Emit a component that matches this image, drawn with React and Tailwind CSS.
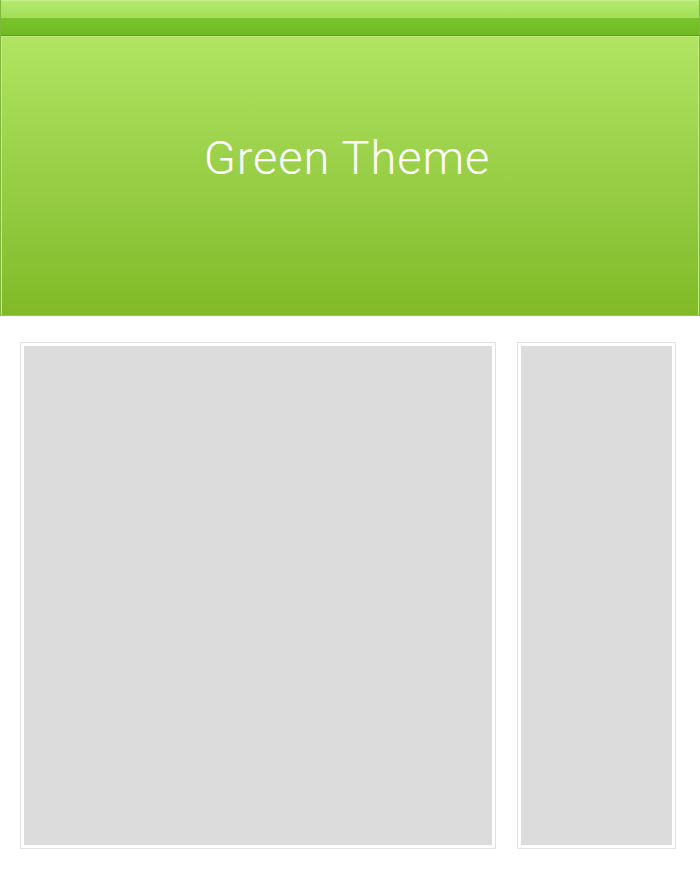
export default function App() {
  return (
    <div className="w-[700px] h-[873px] bg-white flex flex-col">
      <header className="h-[316px] flex flex-col border-x border-[#7fb83a] border-b border-b-[#93c652]">
        <div className="h-[36px] flex flex-col border-t border-[#c6f08c] shadow-[inset_1px_0_0_#c0ec84,inset_-1px_0_0_#c0ec84]">
          <div className="h-[17px] bg-gradient-to-b from-[#b4ea6e] to-[#a2de58]"></div>
          <div className="flex-1 bg-gradient-to-b from-[#7bc42e] to-[#6fb923]"></div>
          <div className="h-px bg-[#5f9f1c]"></div>
        </div>
        <div className="flex-1 flex items-center justify-center pb-[37px] bg-gradient-to-b from-[#b0e462] to-[#81ba25] border-t border-[#bdeb7c] shadow-[inset_1px_0_0_#bfeb82,inset_-1px_0_0_#bfeb82]">
          <h1 className="text-white text-[47px] font-light leading-none tracking-[0.9px] font-['Roboto',_'Liberation_Sans',_sans-serif] -ml-[6px]">Green Theme</h1>
        </div>
      </header>
      <main className="flex gap-[21px] pl-[20px] pt-[26px]">
        <div className="w-[476px] h-[507px] border border-[#e2e2e2] p-[3px] bg-white">
          <div className="w-full h-full bg-[#dcdcdc]"></div>
        </div>
        <div className="w-[159px] h-[507px] border border-[#e2e2e2] p-[3px] bg-white">
          <div className="w-full h-full bg-[#dcdcdc]"></div>
        </div>
      </main>
    </div>
  );
}
